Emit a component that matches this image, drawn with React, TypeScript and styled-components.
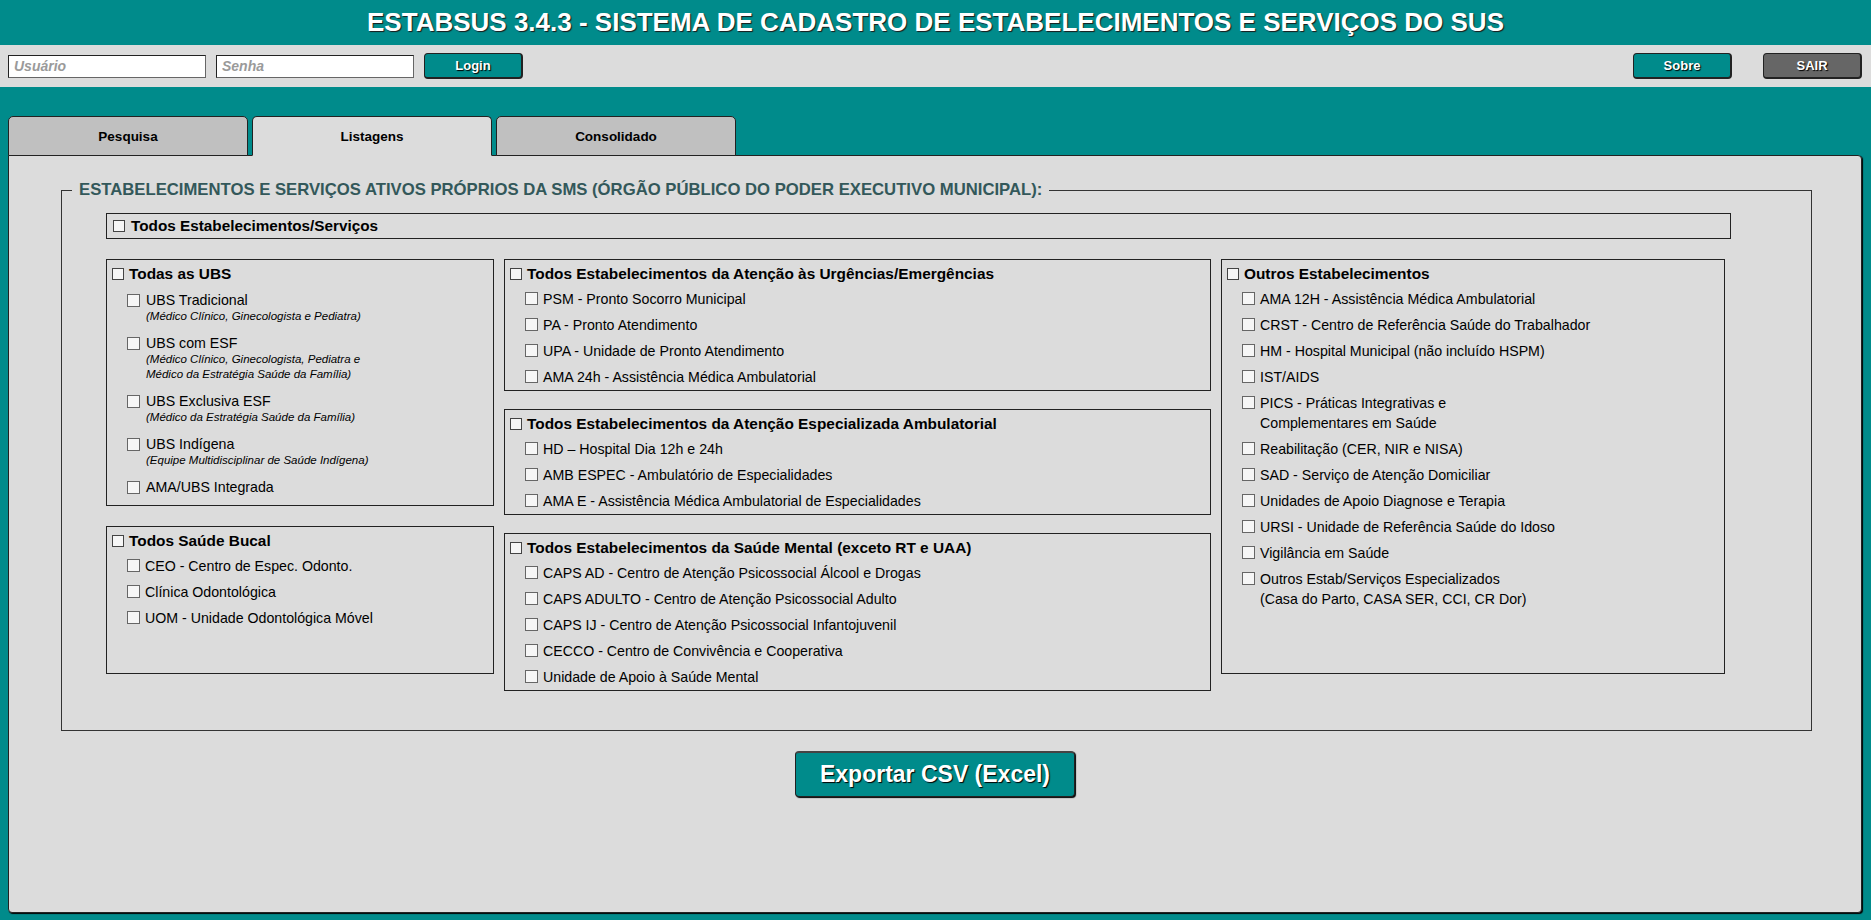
import React from "react";
import styled, { createGlobalStyle } from "styled-components";

const TEAL = "#008b8b";
const LIGHT = "#dcdcdc";
const FONT = `"Liberation Sans", Arial, sans-serif`;

type SubItem = { label: string; notes: string[] };
type Group = { title: string; items: string[][] };

const ubsItems: SubItem[] = [
  { label: "UBS Tradicional", notes: ["(Médico Clínico, Ginecologista e Pediatra)"] },
  {
    label: "UBS com ESF",
    notes: ["(Médico Clínico, Ginecologista, Pediatra e", "Médico da Estratégia Saúde da Família)"],
  },
  { label: "UBS Exclusiva ESF", notes: ["(Médico da Estratégia Saúde da Família)"] },
  { label: "UBS Indígena", notes: ["(Equipe Multidisciplinar de Saúde Indígena)"] },
  { label: "AMA/UBS Integrada", notes: [] },
];

const bucal: Group = {
  title: "Todos Saúde Bucal",
  items: [["CEO - Centro de Espec. Odonto."], ["Clínica Odontológica"], ["UOM - Unidade Odontológica Móvel"]],
};

const middleGroups: Group[] = [
  {
    title: "Todos Estabelecimentos da Atenção às Urgências/Emergências",
    items: [
      ["PSM - Pronto Socorro Municipal"],
      ["PA - Pronto Atendimento"],
      ["UPA - Unidade de Pronto Atendimento"],
      ["AMA 24h - Assistência Médica Ambulatorial"],
    ],
  },
  {
    title: "Todos Estabelecimentos da Atenção Especializada Ambulatorial",
    items: [
      ["HD – Hospital Dia 12h e 24h"],
      ["AMB ESPEC - Ambulatório de Especialidades"],
      ["AMA E - Assistência Médica Ambulatorial de Especialidades"],
    ],
  },
  {
    title: "Todos Estabelecimentos da Saúde Mental (exceto RT e UAA)",
    items: [
      ["CAPS AD - Centro de Atenção Psicossocial Álcool e Drogas"],
      ["CAPS ADULTO - Centro de Atenção Psicossocial Adulto"],
      ["CAPS IJ - Centro de Atenção Psicossocial Infantojuvenil"],
      ["CECCO - Centro de Convivência e Cooperativa"],
      ["Unidade de Apoio à Saúde Mental"],
    ],
  },
];

const outros: Group = {
  title: "Outros Estabelecimentos",
  items: [
    ["AMA 12H - Assistência Médica Ambulatorial"],
    ["CRST - Centro de Referência Saúde do Trabalhador"],
    ["HM - Hospital Municipal (não incluído HSPM)"],
    ["IST/AIDS"],
    ["PICS - Práticas Integrativas e", "Complementares em Saúde"],
    ["Reabilitação (CER, NIR e NISA)"],
    ["SAD - Serviço de Atenção Domiciliar"],
    ["Unidades de Apoio Diagnose e Terapia"],
    ["URSI - Unidade de Referência Saúde do Idoso"],
    ["Vigilância em Saúde"],
    ["Outros Estab/Serviços Especializados", "(Casa do Parto, CASA SER, CCI, CR Dor)"],
  ],
};

function GroupBox({ group, height }: { group: Group; height?: number }) {
  return (
    <Box $height={height}>
      <BoxHeader>
        <Check />
        {group.title}
      </BoxHeader>
      <List>
        {group.items.map((lines) => (
          <Row key={lines[0]}>
            <Check $item />
            <span>
              {lines.map((l, i) => (
                <React.Fragment key={l}>
                  {i > 0 && <br />}
                  {l}
                </React.Fragment>
              ))}
            </span>
          </Row>
        ))}
      </List>
    </Box>
  );
}

export default function App() {
  return (
    <Page>
      <GlobalStyle />
      <TopBar>
        <Title>ESTABSUS 3.4.3 - SISTEMA DE CADASTRO DE ESTABELECIMENTOS E SERVIÇOS DO SUS</Title>
      </TopBar>
      <LoginBar>
        <Field placeholder="Usuário" />
        <Field placeholder="Senha" type="password" />
        <Button>Login</Button>
        <Spacer />
        <Button>Sobre</Button>
        <Button $gap={31} $gray>
          SAIR
        </Button>
      </LoginBar>
      <Tabs>
        <Tab>Pesquisa</Tab>
        <Tab $active>Listagens</Tab>
        <Tab>Consolidado</Tab>
      </Tabs>
      <Panel>
        <Fieldset>
          <Legend>
            ESTABELECIMENTOS E SERVIÇOS ATIVOS PRÓPRIOS DA SMS (ÓRGÃO PÚBLICO DO PODER EXECUTIVO MUNICIPAL):
          </Legend>
          <Inner>
            <AllBox>
              <Check />
              Todos Estabelecimentos/Serviços
            </AllBox>
            <Columns>
              <Column>
                <Box>
                  <BoxHeader>
                    <Check />
                    Todas as UBS
                  </BoxHeader>
                  <UbsList>
                    {ubsItems.map((it) => (
                      <UbsItem key={it.label}>
                        <Check $item $top={3} />
                        <div>
                          <UbsLabel>{it.label}</UbsLabel>
                          {it.notes.map((n) => (
                            <Note key={n}>{n}</Note>
                          ))}
                        </div>
                      </UbsItem>
                    ))}
                  </UbsList>
                </Box>
                <GroupBox group={bucal} height={148} />
              </Column>
              <Column $gap={18}>
                {middleGroups.map((g) => (
                  <GroupBox key={g.title} group={g} />
                ))}
              </Column>
              <Column>
                <GroupBox group={outros} height={415} />
              </Column>
            </Columns>
          </Inner>
        </Fieldset>
        <ExportButton>Exportar CSV (Excel)</ExportButton>
      </Panel>
    </Page>
  );
}

const GlobalStyle = createGlobalStyle`
  html, body {
    margin: 0;
    padding: 0;
    background: ${TEAL};
    font-family: ${FONT};
  }
  * { box-sizing: border-box; }
`;

const Page = styled.div`
  height: 920px;
  display: flex;
  flex-direction: column;
  background: ${TEAL};
  overflow: hidden;
`;

const TopBar = styled.header`
  height: 45px;
  display: flex;
  align-items: center;
  justify-content: center;
`;

const Title = styled.h1`
  margin: 0;
  font-size: 26px;
  font-weight: bold;
  color: #fff;
  text-shadow: 1px 1px 1px #1a1a1a;
`;

const LoginBar = styled.div`
  height: 42px;
  background: ${LIGHT};
  display: flex;
  align-items: center;
  padding: 0 9px 0 8px;
`;

const Field = styled.input`
  width: 198px;
  height: 23px;
  margin-right: 10px;
  border: 1px solid #222;
  border-right-color: #666;
  border-bottom-color: #666;
  background: #fff;
  padding: 0 5px;
  font-family: ${FONT};
  font-size: 14px;

  &::placeholder {
    color: #9a9a9a;
    font-style: italic;
    font-weight: bold;
  }
`;

const Spacer = styled.div`
  flex: 1;
`;

const Button = styled.button<{ $gap?: number; $gray?: boolean }>`
  width: 99px;
  height: 26px;
  margin-left: ${(p) => p.$gap ?? 0}px;
  background: ${(p) => (p.$gray ? "#666" : TEAL)};
  border: 1px solid #222;
  border-right-width: 2px;
  border-bottom-width: 2px;
  border-radius: 4px;
  color: #fff;
  font-family: ${FONT};
  font-size: 13px;
  font-weight: bold;
  text-shadow: 1px 1px 1px #000;
  padding: 0;
`;

const Tabs = styled.nav`
  display: flex;
  gap: 4px;
  padding: 29px 0 0 8px;
  position: relative;
  z-index: 1;
  margin-bottom: -1px;
`;

const Tab = styled.div<{ $active?: boolean }>`
  width: 240px;
  height: 40px;
  display: flex;
  align-items: center;
  justify-content: center;
  background: ${(p) => (p.$active ? LIGHT : "#c0c0c0")};
  border: 1px solid #222;
  border-bottom-color: ${(p) => (p.$active ? LIGHT : "#222")};
  border-radius: 5px 5px 0 0;
  font-size: 13.5px;
  font-weight: bold;
  color: #000;
`;

const Panel = styled.main`
  margin: 0 9px 0 8px;
  height: 758px;
  background: ${LIGHT};
  border: 1px solid #222;
  border-radius: 0 4px 4px 4px;
  box-shadow: 1px 1px 1px #000;
  padding-top: 24px;
  display: flex;
  flex-direction: column;
  align-items: center;
`;

const Fieldset = styled.fieldset`
  align-self: stretch;
  margin: 0 49px 0 52px;
  padding: 0 0 39px 10px;
  border: 1px solid #333;
  min-width: 0;
`;

const Legend = styled.legend`
  padding: 0 7px;
  font-size: 16.7px;
  line-height: 20px;
  font-weight: bold;
  color: #33585a;
`;

const Inner = styled.div`
  margin: 13px 0 0 34px;
  width: 1625px;
`;

const Check = styled.span<{ $item?: boolean; $top?: number }>`
  flex: none;
  display: inline-block;
  width: ${(p) => (p.$item ? 13 : 12)}px;
  height: ${(p) => (p.$item ? 13 : 12)}px;
  border: 1px solid ${(p) => (p.$item ? "#666" : "#444")};
  background: #f6f6f6;
  margin-top: ${(p) => p.$top ?? 0}px;
`;

const AllBox = styled.div`
  height: 26px;
  border: 1px solid #222;
  display: flex;
  align-items: center;
  gap: 6px;
  padding-left: 6px;
  font-size: 15.3px;
  font-weight: bold;
  color: #000;
`;

const Columns = styled.div`
  display: grid;
  grid-template-columns: 388px 707px 504px;
  gap: 10px;
  margin-top: 20px;
  align-items: start;
`;

const Column = styled.div<{ $gap?: number }>`
  display: flex;
  flex-direction: column;
  gap: ${(p) => p.$gap ?? 20}px;
`;

const Box = styled.section<{ $height?: number }>`
  border: 1px solid #222;
  padding: 4px 6px 0 5px;
  ${(p) => (p.$height ? `height: ${p.$height}px;` : "")}
`;

const BoxHeader = styled.div`
  height: 20px;
  display: flex;
  align-items: center;
  gap: 5px;
  font-size: 15.4px;
  font-weight: bold;
  color: #000;
`;

const List = styled.div`
  margin-top: 2px;
`;

const Row = styled.div`
  display: flex;
  align-items: flex-start;
  gap: 5px;
  padding: 3px 0 3px 15px;
  line-height: 20px;
  font-size: 14.2px;
  color: #000;

  ${Check} {
    margin-top: 3px;
  }
`;

const UbsList = styled.div`
  margin-top: 4px;
  padding-bottom: 2px;
`;

const UbsItem = styled.div`
  display: flex;
  align-items: flex-start;
  gap: 6px;
  padding: 3px 0 0 15px;
  margin-bottom: 7px;
`;

const UbsLabel = styled.div`
  font-size: 14.2px;
  line-height: 18px;
  color: #000;
`;

const Note = styled.div`
  font-size: 11.5px;
  line-height: 15px;
  font-style: italic;
  color: #000;
`;

const ExportButton = styled.button`
  margin-top: 20px;
  width: 280px;
  height: 46px;
  background: ${TEAL};
  border: 1px solid #222;
  border-top: 2px solid #444;
  border-radius: 4px;
  box-shadow: 1px 1px 1px #000;
  color: #fff;
  font-family: ${FONT};
  font-size: 23px;
  font-weight: bold;
  text-shadow: 1px 1px 1px #000;
  padding: 0;
`;
